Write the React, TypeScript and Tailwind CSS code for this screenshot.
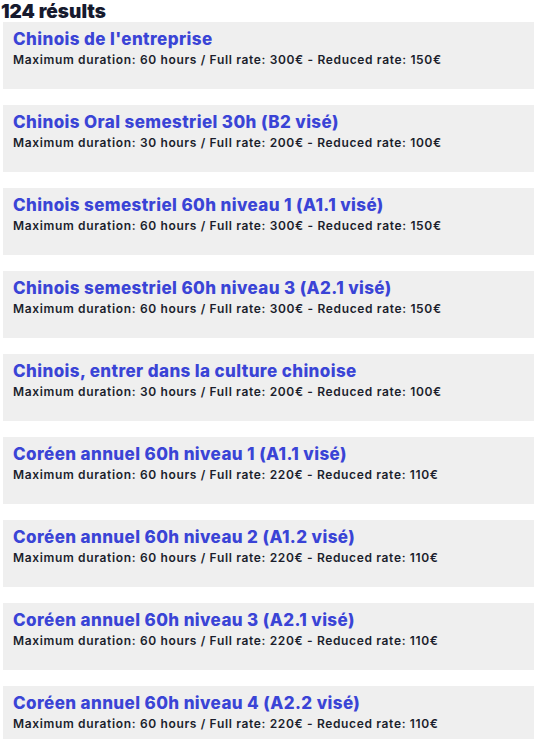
const courses = [
  { title: "Chinois de l'entreprise", hours: 60, full: 300, reduced: 150 },
  { title: 'Chinois Oral semestriel 30h (B2 visé)', hours: 30, full: 200, reduced: 100 },
  { title: 'Chinois semestriel 60h niveau 1 (A1.1 visé)', hours: 60, full: 300, reduced: 150 },
  { title: 'Chinois semestriel 60h niveau 3 (A2.1 visé)', hours: 60, full: 300, reduced: 150 },
  { title: 'Chinois, entrer dans la culture chinoise', hours: 30, full: 200, reduced: 100 },
  { title: 'Coréen annuel 60h niveau 1 (A1.1 visé)', hours: 60, full: 220, reduced: 110 },
  { title: 'Coréen annuel 60h niveau 2 (A1.2 visé)', hours: 60, full: 220, reduced: 110 },
  { title: 'Coréen annuel 60h niveau 3 (A2.1 visé)', hours: 60, full: 220, reduced: 110 },
  { title: 'Coréen annuel 60h niveau 4 (A2.2 visé)', hours: 60, full: 220, reduced: 110 },
];

export default function App() {
  return (
    <div className="w-[535px] h-[739px] overflow-hidden bg-white font-['Inter',sans-serif]">
      <h2 className="pl-[1px] h-[22px] pt-[1px] text-[19px] leading-[21px] font-black text-[#161a2e]">
        124 résults
      </h2>
      <ul className="pl-[3px] pr-[1px]">
        {courses.map((c) => (
          <li key={c.title} className="mb-[16px] h-[67px] bg-[#efefef] pl-[10px] pt-[5px]">
            <h3 className="text-[17px] leading-[24px] font-extrabold tracking-[0.4px] text-[#3a44d6]">{c.title}</h3>
            <p className="text-[12px] leading-[18px] font-semibold tracking-[0.65px] text-[#1b1e2c]">
              Maximum duration: {c.hours} hours / Full rate: {c.full}€ - Reduced rate: {c.reduced}€
            </p>
          </li>
        ))}
      </ul>
    </div>
  );
}
